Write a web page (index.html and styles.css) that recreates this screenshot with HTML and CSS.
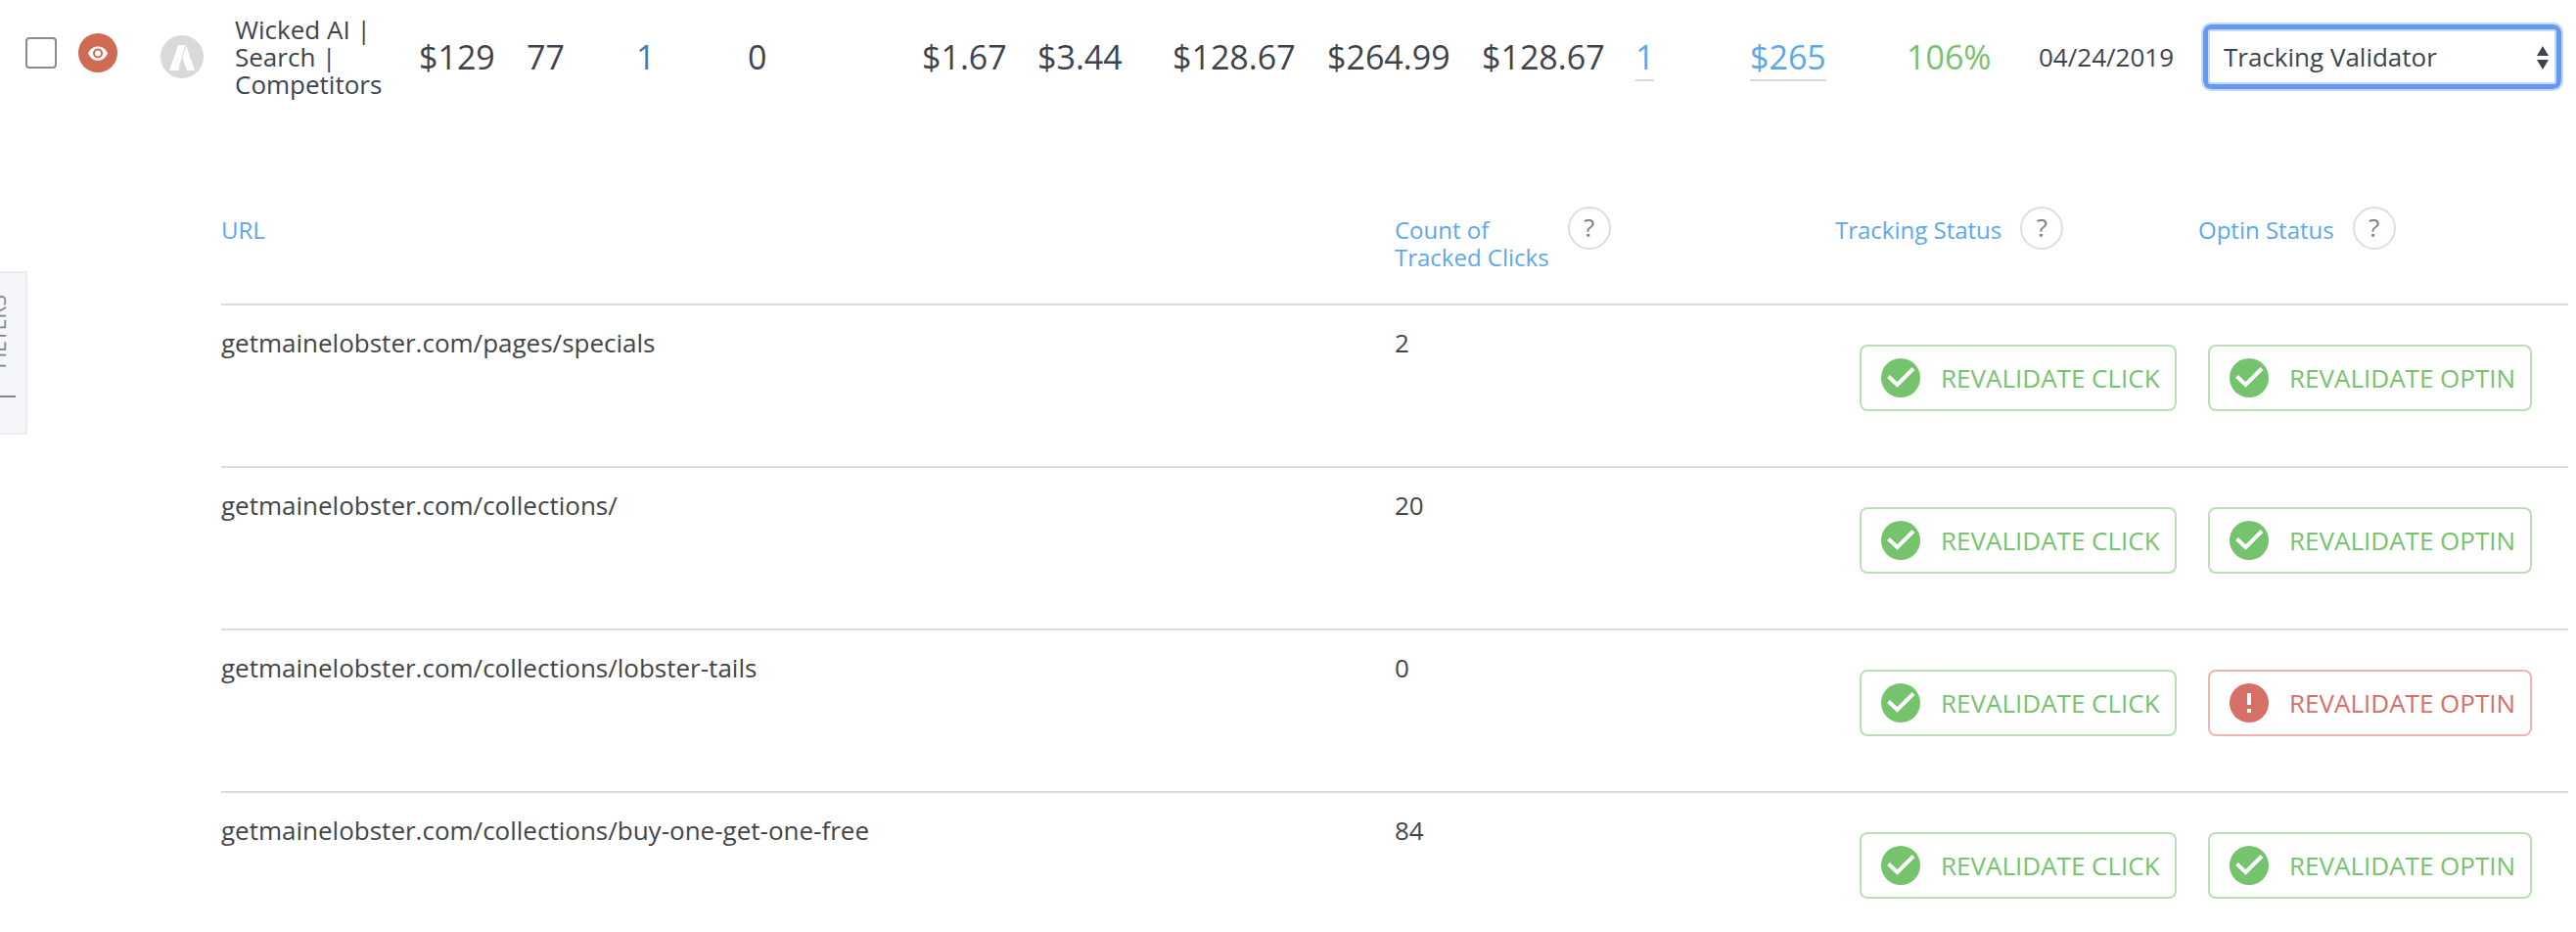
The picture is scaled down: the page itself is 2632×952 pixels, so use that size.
FILE: index.html
```html
<!DOCTYPE html>
<html lang="en">
<head>
	<meta charset="utf-8">
	<title>Tracking Validator</title>
	<link rel="stylesheet" href="styles.css">
</head>
<body>
	<svg class="sprite" aria-hidden="true">
		<symbol id="icon-check" viewBox="0 0 40 40">
			<circle cx="20" cy="20" r="20" fill="#76c36d"/>
			<path d="M7.500 18.500 L16.500 27 L33 10.500" fill="none" stroke="#fff" stroke-width="4"/>
		</symbol>
		<symbol id="icon-alert" viewBox="0 0 40 40">
			<circle cx="20" cy="20" r="20" fill="#d66f66"/>
			<path d="M18 10h4v12h-4zM18 26h4v4h-4z" fill="#fff"/>
		</symbol>
	</svg>

	<button class="filters" type="button"><span class="filters-label">FILTERS</span><span class="filters-bar"></span></button>

	<table class="campaign">
		<colgroup>
			<col class="c-check"><col class="c-eye"><col class="c-source"><col class="c-name">
			<col class="c-cost"><col class="c-clicks"><col class="c-leads"><col class="c-sales"><col class="c-cpc">
			<col class="c-cpl"><col class="c-cpa"><col class="c-aov"><col class="c-ltv">
			<col class="c-customers"><col class="c-revenue"><col class="c-roi"><col class="c-date"><col class="c-action">
		</colgroup>
		<tr>
			<td><input class="pick" type="checkbox" aria-label="Select campaign"></td>
			<td>
				<button class="eye" type="button" aria-label="Hide campaign">
					<svg viewBox="0 0 40 40" width="40" height="40">
						<circle cx="20" cy="20" r="20" fill="#cf6a53"/>
						<path d="M10 20.500C12 16 15.500 13.500 20 13.500S28 16 30 20.500C28 25 24.500 28 20 28S12 25 10 20.500z" fill="#fff"/>
						<circle cx="20" cy="20.500" r="4" fill="#fff" stroke="#cf6a53" stroke-width="2"/>
					</svg>
				</button>
			</td>
			<td>
				<svg class="source" viewBox="0 0 44 44" width="44" height="44">
					<circle cx="22" cy="22" r="22" fill="#d8d9db"/>
					<path d="M18 10h8L35 36H27L22 22 19 36H9z" fill="#fff"/>
					<path d="M26 10L18.500 35" stroke="#d8d9db" stroke-width="1"/>
				</svg>
			</td>
			<td class="name">Wicked AI |<br>Search |<br>Competitors</td>
			<td>$129</td>
			<td>77</td>
			<td><a class="lead" href="#">1</a></td>
			<td>0</td>
			<td>$1.67</td>
			<td>$3.44</td>
			<td>$128.67</td>
			<td>$264.99</td>
			<td>$128.67</td>
			<td><a class="detail" href="#">1</a></td>
			<td><a class="detail" href="#">$265</a></td>
			<td class="roi">106%</td>
			<td class="date">04/24/2019</td>
			<td>
				<div class="action">
					<select aria-label="Action"><option>Tracking Validator</option></select>
					<svg class="arrows" viewBox="0 0 12 24" width="12" height="24"><path d="M6 0L12 10H0zM6 24L0 14H12z" fill="#3d444f"/></svg>
				</div>
			</td>
		</tr>
	</table>

	<table class="urls">
		<colgroup><col class="u-url"><col class="u-count"><col class="u-click"><col class="u-optin"></colgroup>
		<thead>
			<tr>
				<th>URL</th>
				<th><div class="head"><span>Count of<br>Tracked Clicks</span><button class="help" type="button">?</button></div></th>
				<th><div class="head"><span>Tracking Status</span><button class="help" type="button">?</button></div></th>
				<th><div class="head"><span>Optin Status</span><button class="help" type="button">?</button></div></th>
			</tr>
		</thead>
		<tbody>
			<tr>
				<td>getmainelobster.com/pages/specials</td>
				<td>2</td>
				<td class="status"><button class="validate click" type="button"><svg><use href="#icon-check"/></svg>REVALIDATE CLICK</button></td>
				<td class="status"><button class="validate optin" type="button"><svg><use href="#icon-check"/></svg>REVALIDATE OPTIN</button></td>
			</tr>
			<tr>
				<td>getmainelobster.com/collections/</td>
				<td>20</td>
				<td class="status"><button class="validate click" type="button"><svg><use href="#icon-check"/></svg>REVALIDATE CLICK</button></td>
				<td class="status"><button class="validate optin" type="button"><svg><use href="#icon-check"/></svg>REVALIDATE OPTIN</button></td>
			</tr>
			<tr>
				<td>getmainelobster.com/collections/lobster-tails</td>
				<td>0</td>
				<td class="status"><button class="validate click" type="button"><svg><use href="#icon-check"/></svg>REVALIDATE CLICK</button></td>
				<td class="status"><button class="validate optin failed" type="button"><svg><use href="#icon-alert"/></svg>REVALIDATE OPTIN</button></td>
			</tr>
			<tr>
				<td>getmainelobster.com/collections/buy-one-get-one-free</td>
				<td>84</td>
				<td class="status"><button class="validate click" type="button"><svg><use href="#icon-check"/></svg>REVALIDATE CLICK</button></td>
				<td class="status"><button class="validate optin" type="button"><svg><use href="#icon-check"/></svg>REVALIDATE OPTIN</button></td>
			</tr>
		</tbody>
	</table>
</body>
</html>
```

FILE: styles.css
```css
* {
	box-sizing: border-box;
}

body {
	margin: 0;
	background: #fff;
	color: #3d444f;
	font-family: "Open Sans", "Noto Sans", sans-serif;
	font-size: 26px;
	line-height: 28px;
}

button,
select {
	font: inherit;
	color: inherit;
}

.sprite {
	position: absolute;
	width: 0;
	height: 0;
}

table {
	table-layout: fixed;
	border-collapse: collapse;
}

td,
th {
	padding: 0;
	text-align: left;
	font-weight: normal;
	white-space: nowrap;
}

/* filters tab, hangs over the left edge */
.filters {
	position: absolute;
	left: 0;
	top: 277px;
	display: flex;
	flex-direction: column;
	align-items: flex-start;
	gap: 28px;
	width: 28px;
	height: 167px;
	padding: 22px 0 0;
	border: 2px solid #ececec;
	border-left: 0;
	background: #f5f6f9;
	color: #86868b;
	font-size: 21px;
	overflow: hidden;
}

.filters-label {
	margin-left: -16px;
	writing-mode: vertical-rl;
	transform: rotate(180deg);
}

.filters-bar {
	width: 16px;
	height: 2px;
	background: #86868b;
}

/* campaign row */
.campaign {
	width: 100%;
	font-size: 34px;
}

.campaign td {
	height: 116px;
	vertical-align: middle;
}

.c-check { width: 80px; }
.c-eye { width: 84px; }
.c-source { width: 76px; }
.c-name { width: 188px; }
.c-cost { width: 110px; }
.c-clicks { width: 112px; }
.c-leads { width: 114px; }
.c-sales { width: 178px; }
.c-cpc { width: 118px; }
.c-cpl { width: 138px; }
.c-cpa { width: 158px; }
.c-aov { width: 158px; }
.c-ltv { width: 157px; }
.c-customers { width: 117px; }
.c-revenue { width: 160px; }
.c-roi { width: 135px; }
.c-date { width: 168px; }
.c-action { width: 381px; }

.pick {
	display: block;
	appearance: none;
	width: 32px;
	height: 32px;
	margin: 0 0 8px 26px;
	border: 2px solid #8c8c8c;
	border-radius: 4px;
	background: #fff;
}

.eye {
	display: block;
	margin: 0 0 8px;
	padding: 0;
	border: 0;
	background: none;
}

.eye svg,
.source {
	display: block;
}

.campaign .name,
.campaign .date {
	font-size: 26px;
}

a {
	text-decoration: none;
}

.lead {
	color: #3f7ab8;
}

.detail {
	color: #5ba8ec;
	border-bottom: 2px solid #d9d9d9;
}

.roi {
	color: #76c36d;
}

.action {
	position: relative;
	margin-right: 15px;
	font-size: 26px;
}

.action select {
	display: block;
	width: 100%;
	height: 66px;
	padding: 0 16px;
	appearance: none;
	border: 5px solid #6598ee;
	border-radius: 8px;
	outline: 2px solid #c3dafa;
	background: #fff;
	box-shadow: inset 0 0 0 2px #c3dafa;
	line-height: 40px;
}

.arrows {
	position: absolute;
	right: 13px;
	top: 22px;
	pointer-events: none;
}

/* tracked urls */
.urls {
	width: calc(100% - 234px);
	margin: 86px 8px 0 226px;
	color: #434649;
}

.u-url { width: 1199px; }
.u-count { width: 450px; }
.u-click { width: 371px; }
.u-optin { width: 378px; }

.urls th {
	height: 109px;
	padding-top: 19px;
	vertical-align: top;
	color: #5ba8ec;
	font-size: 24px;
}

.head {
	display: flex;
	gap: 19px;
}

.help {
	width: 44px;
	height: 44px;
	margin-top: -10px;
	padding: 0 0 2px;
	border: 2px solid #dedede;
	border-radius: 50%;
	background: #fff;
	color: #808080;
	font-size: 26px;
}

.urls tbody td {
	height: 166px;
	padding-top: 24px;
	border-top: 2px solid #dcdcdc;
	vertical-align: top;
}

.urls tbody .status {
	padding-top: 40px;
}

.validate {
	display: flex;
	align-items: center;
	gap: 21px;
	height: 68px;
	padding: 0 15px 0 20px;
	border: 2px solid #b9e0b5;
	border-radius: 8px;
	background: #fff;
	color: #76c36d;
}

.validate svg {
	width: 40px;
	height: 40px;
}

.click {
	margin-left: 25px;
}

.optin {
	margin-left: 10px;
}

.failed {
	border-color: #edb5b0;
	color: #d66f66;
}
```
